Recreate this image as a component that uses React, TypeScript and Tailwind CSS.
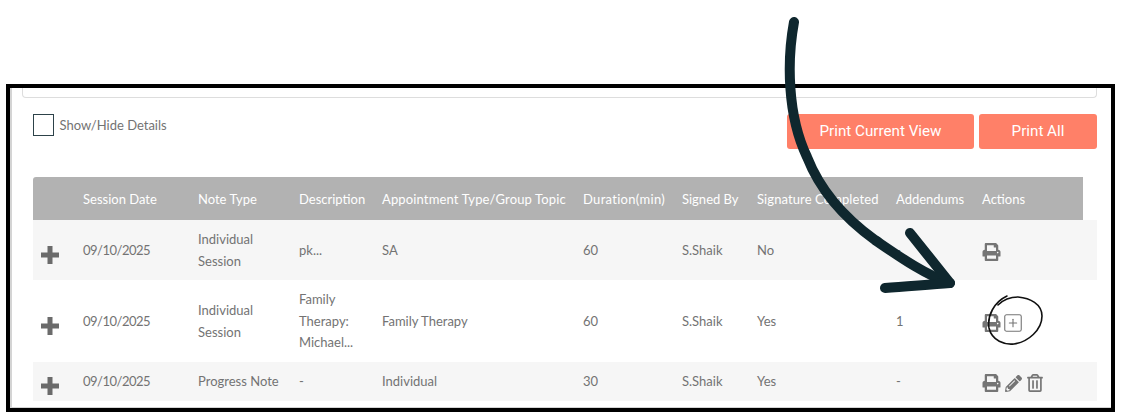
import { FaPencilAlt, FaPrint, FaRegTrashAlt } from "react-icons/fa"
import { FiPlusSquare } from "react-icons/fi"

const gridCols = "grid grid-cols-[50px_115px_101px_83px_201px_99px_75px_139px_86px_1fr] items-center"

const columns = [
  { label: "", className: "" },
  { label: "Session Date", className: "" },
  { label: "Note Type", className: "" },
  { label: "Description", className: "" },
  { label: "Appointment Type/Group Topic", className: "tracking-[0.14px]" },
  { label: "Duration(min)", className: "tracking-[0.3px]" },
  { label: "Signed By", className: "" },
  { label: "Signature Completed", className: "tracking-[0.1px]" },
  { label: "Addendums", className: "" },
  { label: "Actions", className: "" },
]

interface SessionRow {
  note: string[]
  description: string[]
  topic: string
  duration: string
  signature: string
  addendums: string
  height: string
  striped: boolean
  actions: "print" | "add" | "full"
}

const rows: SessionRow[] = [
  { note: ["Individual", "Session"], description: ["pk..."], topic: "SA", duration: "60", signature: "No", addendums: "-", height: "h-[60px]", striped: true, actions: "print" },
  { note: ["Individual", "Session"], description: ["Family", "Therapy:", "Michael..."], topic: "Family Therapy", duration: "60", signature: "Yes", addendums: "1", height: "h-[82px]", striped: false, actions: "add" },
  { note: ["Progress Note"], description: ["-"], topic: "Individual", duration: "30", signature: "Yes", addendums: "-", height: "h-[39px]", striped: true, actions: "full" },
]

function Lines({ lines }: { lines: string[] }) {
  return (
    <div className="leading-[21.5px]">
      {lines.map((line) => (
        <div key={line}>{line}</div>
      ))}
    </div>
  )
}

function ExpandIcon() {
  return (
    <svg className="relative top-[4px] ml-[8px] h-[18px] w-[18px] text-[#6b6b6b]" viewBox="0 0 18 18" fill="currentColor">
      <path d="M6.5 0h5v6.5H18v5h-6.5V18h-5v-6.5H0v-5h6.5z" />
    </svg>
  )
}

function Actions({ kind }: { kind: SessionRow["actions"] }) {
  return (
    <div className="relative top-[1px] flex items-center text-[#757575]">
      <FaPrint className="h-[18px] w-[19px]" />
      {kind === "add" ? <FiPlusSquare className="ml-[1px] h-[22px] w-[22px]" strokeWidth={1.2} /> : null}
      {kind === "full" ? (
        <>
          <FaPencilAlt className="ml-[4px] h-[17px] w-[17px]" />
          <FaRegTrashAlt className="ml-[4px] h-[18px] w-[18px]" />
        </>
      ) : null}
    </div>
  )
}

export default function App() {
  return (
    <div className="relative h-[418px] w-[1127px] overflow-hidden bg-white pl-[6px] pt-[84px] font-['Lato',sans-serif] text-[13px] text-[#737373]">
      <div className="h-[328px] w-[1109px] border-4 border-black bg-white pl-[12px] shadow-[inset_2px_0_0_#d4d4d4,inset_0_-1px_0_#d4d4d4]">
        <div className="h-[10px] w-[1075px] rounded-b-sm border border-t-0 border-[#dddddd]" />

        <div className="flex h-[79px] w-[1075px] items-start justify-between pl-[11px] pt-[16px]">
          <label className="flex items-center gap-[5px]">
            <span className="h-[22px] w-[21px] border border-[#2d4249]" />
            <span className="relative top-[1px] left-[0.5px]">Show/Hide Details</span>
          </label>
          <div className="flex gap-[5px] font-['Roboto',sans-serif] text-[15.2px] text-white">
            <button type="button" className="h-[35px] w-[187px] rounded-[3px] bg-[#ff8068]">Print Current View</button>
            <button type="button" className="h-[35px] w-[118px] rounded-[3px] bg-[#ff8068]">Print All</button>
          </div>
        </div>

        <div className="ml-[11px] w-[1064px]">
          <div className={`${gridCols} h-[43px] w-[1050px] rounded-tl-[3px] bg-[#b2b2b2] pt-[2px] text-white`}>
            {columns.map((column, index) => (
              <div key={index} className={`whitespace-nowrap ${column.className}`}>{column.label}</div>
            ))}
          </div>
          {rows.map((row, index) => (
            <div key={index} className={`${gridCols} ${row.height} ${row.striped ? "bg-[#f6f6f6]" : "bg-white"} pt-[1px]`}>
              <ExpandIcon />
              <div className="tracking-[-0.5px]">09/10/2025</div>
              <Lines lines={row.note} />
              <Lines lines={row.description} />
              <div>{row.topic}</div>
              <div>{row.duration}</div>
              <div>S.Shaik</div>
              <div>{row.signature}</div>
              <div>{row.addendums}</div>
              <Actions kind={row.actions} />
            </div>
          ))}
        </div>
      </div>

      {/* hand drawn annotations on top of the screenshot */}
      <svg className="absolute left-0 top-0" width="1127" height="418" fill="none">
        <path
          d="M794 22C787 60 787 115 807 157C822 195 850 222 875 240C897 255 925 275 950 283"
          stroke="#0f272e"
          strokeWidth="10"
          strokeLinecap="round"
        />
        <path
          d="M910 233C925 252 938 268 950 283C928 285 906 286 885 288"
          stroke="#0f272e"
          strokeWidth="10"
          strokeLinecap="round"
          strokeLinejoin="round"
        />
        <path
          d="M1007 296C994 302 987 316 989 328C992 341 1005 345 1014 344C1028 342 1042 330 1042 316C1042 304 1030 298 1018 297C1010 297 1003 300 998 305"
          stroke="#111111"
          strokeWidth="1.6"
          strokeLinecap="round"
        />
      </svg>
    </div>
  )
}
